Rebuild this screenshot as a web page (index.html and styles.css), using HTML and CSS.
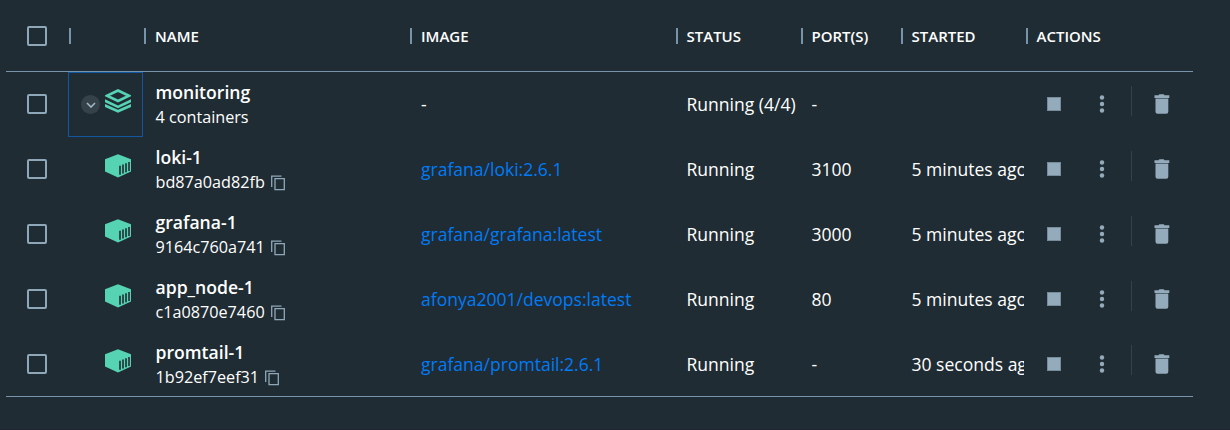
FILE: index.html
```html
<!DOCTYPE html>
<html lang="en">
<head>
<meta charset="utf-8">
<title>Containers</title>
<link rel="stylesheet" href="styles.css">
</head>
<body>
<svg class="sprite" aria-hidden="true">
  <symbol id="stack" viewBox="0 0 26 24">
    <path d="M13 1.5 24 6.800 13 12 2 6.800Z" fill="none" stroke="currentColor" stroke-width="2.600"/>
    <path d="M0 10.400 13 16.600l13-6.200v3L13 19.500 0 13.400Z M0 15.200 13 21l13-5.800v2.900L13 24 0 18.100Z" fill="currentColor" transform="translate(0 -.2)"/>
  </symbol>
  <symbol id="box" viewBox="0 0 26 24">
    <path d="M13 .3 26 5.200V17.600L13 23.500 0 17.600V5.200Z" fill="currentColor"/>
    <path d="M15 11.700v9M18 10.500v9M21 9.300v9M24 8v9" stroke="#202c33" stroke-width="1.600"/>
  </symbol>
  <symbol id="copy" viewBox="0 0 15 16">
    <path d="M.7 12V1.200H10.500M4 3.700h9.300v11H4Z" fill="none" stroke="currentColor" stroke-width="1.300"/>
  </symbol>
  <symbol id="trash" viewBox="0 0 16 20">
    <path d="M.5 1.300H4.600L5.300.3h4.500l.7 1H15.300V4H.5Z M1.500 5H14.300V17.700Q14.300 19.800 12.300 19.800H3.500Q1.500 19.800 1.500 17.700Z" fill="currentColor"/>
    <path d="M1.500 4H14.300V5H1.500Z" fill="#536773"/>
  </symbol>
  <symbol id="dots" viewBox="0 0 6 18">
    <circle cx="3" cy="2.500" r="2.200" fill="currentColor"/><circle cx="3" cy="9" r="2.200" fill="currentColor"/><circle cx="3" cy="15.500" r="2.200" fill="currentColor"/>
  </symbol>
</svg>
<main class="table">
  <div class="row head">
    <div class="check"><span class="checkbox"></span></div>
    <div class="th"></div>
    <div class="th">NAME</div>
    <div class="th">IMAGE</div>
    <div class="th">STATUS</div>
    <div class="th">PORT(S)</div>
    <div class="th">STARTED</div>
    <div class="th">ACTIONS</div>
  </div>
  <div class="row">
    <div class="check"><span class="checkbox"></span></div>
    <div class="type focused"><span class="toggle"><svg class="chevron" viewBox="0 0 10 6"><path d="M1 1l4 4 4-4" fill="none" stroke="currentColor" stroke-width="1.600"/></svg></span><svg class="kind"><use href="#stack"/></svg></div>
    <div class="name"><strong>monitoring</strong><span class="sub">4 containers</span></div>
    <div class="cell">-</div>
    <div class="cell">Running (4/4)</div>
    <div class="cell">-</div>
    <div class="cell"></div>
    <div class="actions"><span class="stop"></span><svg class="dots"><use href="#dots"/></svg><span class="divider"></span><svg class="trash"><use href="#trash"/></svg></div>
  </div>
  <div class="row">
    <div class="check"><span class="checkbox"></span></div>
    <div class="type"><svg class="kind"><use href="#box"/></svg></div>
    <div class="name"><strong>loki-1</strong><span class="sub">bd87a0ad82fb<svg class="copy"><use href="#copy"/></svg></span></div>
    <div class="cell link">grafana/loki:2.6.1</div>
    <div class="cell">Running</div>
    <div class="cell">3100</div>
    <div class="cell started">5 minutes ago</div>
    <div class="actions"><span class="stop"></span><svg class="dots"><use href="#dots"/></svg><span class="divider"></span><svg class="trash"><use href="#trash"/></svg></div>
  </div>
  <div class="row">
    <div class="check"><span class="checkbox"></span></div>
    <div class="type"><svg class="kind"><use href="#box"/></svg></div>
    <div class="name"><strong>grafana-1</strong><span class="sub">9164c760a741<svg class="copy"><use href="#copy"/></svg></span></div>
    <div class="cell link">grafana/grafana:latest</div>
    <div class="cell">Running</div>
    <div class="cell">3000</div>
    <div class="cell started">5 minutes ago</div>
    <div class="actions"><span class="stop"></span><svg class="dots"><use href="#dots"/></svg><span class="divider"></span><svg class="trash"><use href="#trash"/></svg></div>
  </div>
  <div class="row">
    <div class="check"><span class="checkbox"></span></div>
    <div class="type"><svg class="kind"><use href="#box"/></svg></div>
    <div class="name"><strong>app_node-1</strong><span class="sub">c1a0870e7460<svg class="copy"><use href="#copy"/></svg></span></div>
    <div class="cell link">afonya2001/devops:latest</div>
    <div class="cell">Running</div>
    <div class="cell">80</div>
    <div class="cell started">5 minutes ago</div>
    <div class="actions"><span class="stop"></span><svg class="dots"><use href="#dots"/></svg><span class="divider"></span><svg class="trash"><use href="#trash"/></svg></div>
  </div>
  <div class="row last">
    <div class="check"><span class="checkbox"></span></div>
    <div class="type"><svg class="kind"><use href="#box"/></svg></div>
    <div class="name"><strong>promtail-1</strong><span class="sub">1b92ef7eef31<svg class="copy"><use href="#copy"/></svg></span></div>
    <div class="cell link">grafana/promtail:2.6.1</div>
    <div class="cell">Running</div>
    <div class="cell">-</div>
    <div class="cell started">30 seconds ago</div>
    <div class="actions"><span class="stop"></span><svg class="dots"><use href="#dots"/></svg><span class="divider"></span><svg class="trash"><use href="#trash"/></svg></div>
  </div>
</main>
</body>
</html>
```
FILE: styles.css
```css
* { box-sizing: border-box; }
body {
  margin: 0;
  height: 430px;
  overflow: hidden;
  background: #202c33;
  border-bottom: 1px solid #1f2430;
  color: #fff;
  font-family: "Open Sans", sans-serif;
}
svg { display: block; flex: none; }
.sprite { display: none; }
.table {
  width: 1187px;
  margin-left: 6px;
  border-bottom: 1px solid #7794ab;
}
.row {
  display: grid;
  grid-template-columns: 62px 75px 266px 265.500px 125px 100px 125px 168.500px;
  height: 65px;
}
.row.last { height: 64px; }
.head { height: 72px; border-bottom: 1px solid #7794ab; }
.check { display: flex; align-items: center; padding: 0 0 1px 21px; }
.head .check { padding-bottom: 0; }
.checkbox {
  width: 20px;
  height: 20px;
  border: 2px solid #8fa8b9;
  border-radius: 2px;
}
.th {
  display: flex;
  align-items: center;
  font-size: 15px;
  font-weight: 600;
}
.th::before {
  content: "";
  width: 2px;
  height: 16px;
  margin-right: 9px;
  margin-left: 1px;
  background: #7794ab;
}
.type {
  display: flex;
  justify-content: flex-end;
  align-items: flex-start;
  padding: 17px 12px 0 0;
}
.focused {
  border: 1px solid #1257a0;
  padding: 16px 11px 0 0;
}
.kind { width: 26px; height: 24px; color: #56d3b3; }
.toggle {
  display: flex;
  align-items: center;
  justify-content: center;
  width: 19px;
  height: 19px;
  margin: 6px 5px 0 0;
  border-radius: 50%;
  background: #36424a;
  color: #a3b8c6;
}
.chevron { width: 10px; height: 6px; }
.name { padding: 8px 0 0 12.500px; line-height: 24px; white-space: nowrap; }
.name strong { display: block; font-size: 17.600px; font-weight: 600; }
.sub { display: flex; align-items: center; font-size: 16.200px; line-height: 27px; }
.copy { width: 15px; height: 16px; margin-left: 6px; color: #8fa8b9; }
.cell {
  padding-left: 12px;
  line-height: 65px;
  font-size: 17.550px;
  white-space: nowrap;
  overflow: hidden;
}
.started { margin-right: 1px; }
.last .cell { line-height: 64px; }
.link { color: #007bf5; }
.actions { display: flex; align-items: center; padding: 0 0 1px 22px; color: #94abbb; }
.stop { width: 14px; height: 14px; background: #94abbb; border: 1px solid #768c9b; }
.dots { width: 6px; height: 18px; margin-left: 38px; }
.divider { width: 1px; height: 30px; margin: -7px 22px 0 26px; background: #35424a; }
.trash { width: 16px; height: 20px; }
```
